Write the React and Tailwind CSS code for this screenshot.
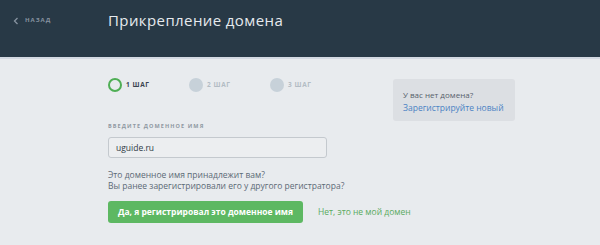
import React, { useState } from "react";

const steps = [
  { n: 1, active: true },
  { n: 2, active: false },
  { n: 3, active: false },
];

const App = () => {
  const [domain, setDomain] = useState("uguide.ru");

  return (
    <div
      className="w-[600px] h-[245px] bg-[#e8ebee] overflow-hidden"
      style={{ fontFamily: "'Open Sans', 'Liberation Sans', sans-serif" }}
    >
      {/* header */}
      <div className="h-[57px] bg-[#283946] border-b-2 border-[#d3d9e2] box-content flex items-start">
        <a href="#" className="w-[108px] pl-[13px] pt-[16px] flex items-center gap-[6px] text-[#8793a0]">
          <svg width="6" height="8" viewBox="0 0 6 8" fill="none">
            <path d="M4.5 1L1.5 4l3 3" stroke="currentColor" strokeWidth="1.3" />
          </svg>
          <span className="text-[6px] font-bold tracking-[1px]">НАЗАД</span>
        </a>
        <h1 className="pt-[9px] text-[15px] font-medium text-[#e6eaee] tracking-[0.4px]">
          Прикрепление домена
        </h1>
      </div>

      {/* body */}
      <div className="flex pl-[108px]">
        <div className="w-[285px] shrink-0">
          <div className="flex mt-[19px] h-[14px]">
            {steps.map((s) => (
              <div key={s.n} className="w-[81px] flex items-center gap-[4px]">
                <div
                  className={
                    s.active
                      ? "w-[14px] h-[14px] rounded-full border-2 border-[#4fae55]"
                      : "w-[14px] h-[14px] rounded-full bg-[#c7d1d9]"
                  }
                />
                <span
                  className={
                    s.active
                      ? "text-[6.5px] font-bold text-[#3a4450] tracking-[0.6px]"
                      : "text-[6.5px] font-bold text-[#b3bcc4] tracking-[0.6px]"
                  }
                >
                  {s.n} ШАГ
                </span>
              </div>
            ))}
          </div>

          <div className="mt-[30px] text-[5.5px] font-bold tracking-[1.1px] text-[#8f99a2] leading-[8px]">
            ВВЕДИТЕ ДОМЕННОЕ ИМЯ
          </div>
          <input
            value={domain}
            onChange={(e) => setDomain(e.target.value)}
            className="mt-[7px] w-[219px] h-[21px] px-[7px] rounded-[3px] border border-[#c4c9ce] bg-[#eceef0] text-[8.5px] text-[#2f3a44] outline-none"
          />

          <p className="mt-[11px] text-[8.5px] leading-[11px] text-[#5c6a76] whitespace-nowrap">
            Это доменное имя принадлежит вам?
            <br />
            Вы ранее зарегистрировали его у другого регистратора?
          </p>

          <div className="mt-[10px] flex items-center gap-[15px]">
            <button className="shrink-0 w-[195px] h-[22px] rounded-[3px] bg-[#5db862] text-white text-[8.5px] font-bold whitespace-nowrap">
              Да, я регистрировал это доменное имя
            </button>
            <a href="#" className="shrink-0 text-[8.5px] text-[#5aaa5e] whitespace-nowrap">
              Нет, это не мой домен
            </a>
          </div>
        </div>

        <div className="mt-[20px] w-[122px] h-[42px] rounded-[3px] bg-[#dcdfe3] pl-[10px] pt-[9px]">
          <p className="text-[8px] leading-[13px] text-[#56616b]">У вас нет домена?</p>
          <a href="#" className="block text-[8.5px] leading-[13px] text-[#4b83c4] whitespace-nowrap">
            Зарегистрируйте новый
          </a>
        </div>
      </div>
    </div>
  );
};

export default App;
